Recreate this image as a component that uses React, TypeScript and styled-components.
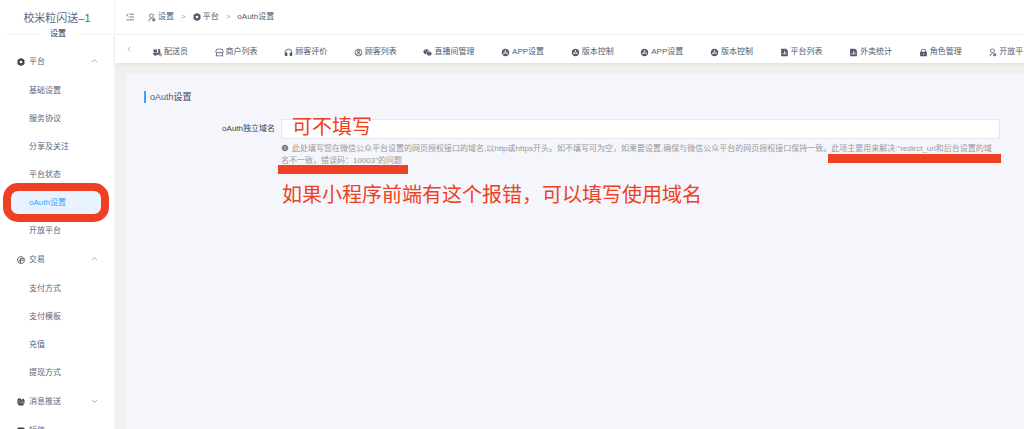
import React from "react";
import styled, { createGlobalStyle, css } from "styled-components";
import {
  RiAccountCircleLine,
  RiAppStoreFill,
  RiFileChartFill,
  RiHeadphoneFill,
  RiInformationFill,
  RiLockFill,
  RiStore2Line,
  RiUserSettingsLine,
  RiWechatFill,
} from "react-icons/ri";

const RED = "#ee4023";

const GlobalStyle = createGlobalStyle`
  * { box-sizing: border-box; }
  body {
    margin: 0;
    overflow: hidden;
    background: #f0f0f0;
    color: #515a6e;
    font: 8px/12px "Liberation Sans", "Noto Sans CJK SC", sans-serif;
  }
  button, input { font: inherit; color: inherit; }
  a { color: inherit; text-decoration: none; }
  svg { display: block; flex: none; }
`;

const Page = styled.div`
  display: flex;
  height: 100vh;
`;

const Sidebar = styled.aside`
  flex: none;
  width: 115px;
  overflow: hidden;
  background: #fff;
  border-right: 1px solid #f4f4f4;
  color: #5c6579;
`;

const Brand = styled.h1`
  margin: 0;
  padding-top: 10px;
  font-size: 11px;
  line-height: 16px;
  font-weight: 400;
  text-align: center;
`;

const SectionName = styled.div`
  display: flex;
  align-items: center;
  gap: 12px;
  padding: 2px 4px 0 6px;
  margin-bottom: 7px;
  color: #303133;
  &::before, &::after {
    content: "";
    flex: 1;
    height: 1px;
    background: #f0f1f3;
  }
`;

const GroupHeader = styled.button`
  display: flex;
  align-items: center;
  gap: 4px;
  width: 100%;
  height: 29px;
  padding: 0 16px 0 17px;
  border: 0;
  background: none;
  text-align: left;
`;

const GroupLabel = styled.span`
  flex: 1;
`;

const GroupList = styled.ul`
  margin: 0;
  padding: 1px 6px 0;
  list-style: none;
`;

const MenuLink = styled.a<{ $active?: boolean }>`
  position: relative;
  display: flex;
  align-items: center;
  height: 28px;
  padding-left: 23px;
  ${(p) =>
    p.$active &&
    css`
      background: #e8f3ff;
      color: #409eff;
      border-radius: 2px;
    `}
`;

const Ring = styled.span`
  position: absolute;
  inset: -6px -1px -5px -3px;
  border: 8px solid ${RED};
  border-radius: 15px;
`;

const Main = styled.main`
  flex: 1;
  min-width: 0;
  display: flex;
  flex-direction: column;
`;

const TopBar = styled.header`
  display: flex;
  align-items: center;
  gap: 13px;
  height: 35px;
  padding: 0 11px;
  background: #fff;
  border-bottom: 1px solid #f2f2f4;
`;

const IconButton = styled.button`
  display: flex;
  padding: 0;
  border: 0;
  background: none;
`;

const Crumbs = styled.nav`
  display: flex;
  align-items: center;
  gap: 7px;
`;

const Crumb = styled.a`
  display: flex;
  align-items: center;
  gap: 2px;
`;

const Separator = styled.span`
  color: #a0a4ad;
`;

const TabBar = styled.div`
  display: flex;
  height: 28px;
  flex: none;
  padding-left: 11px;
  background: #fff;
  box-shadow: 0 1px 3px rgba(0, 0, 0, 0.08);
`;

const ScrollButton = styled(IconButton)`
  width: 27px;
  padding-top: 11px;
`;

const Tabs = styled.nav`
  flex: 1;
  min-width: 0;
  display: flex;
  align-items: center;
  column-gap: 2.6vw;
  padding-top: 6px;
  overflow: hidden;
  white-space: nowrap;
`;

const Tab = styled.a`
  flex: none;
  display: flex;
  align-items: center;
  gap: 2px;
`;

const Panel = styled.section`
  flex: 1;
  margin: 11px 0 0 11px;
  padding: 17px 24px 0 18px;
  background: #f5f6fb;
`;

const PanelTitle = styled.h2`
  margin: 0 0 16px;
  padding-left: 4px;
  border-left: 2px solid #409eff;
  font-size: 9px;
  line-height: 12px;
  font-weight: 500;
`;

const FormRow = styled.div`
  display: flex;
  gap: 6px;
`;

const FieldLabel = styled.label`
  width: 131px;
  line-height: 20px;
  text-align: right;
  color: #404145;
`;

const Field = styled.div`
  position: relative;
  flex: 1;
  min-width: 0;
`;

const TextInput = styled.input`
  display: block;
  width: 100%;
  height: 20px;
  padding: 0 8px;
  border: 1px solid #e6e8ee;
  border-radius: 2px;
  background: #fff;
`;

const Help = styled.p`
  margin: 4px 0 0;
  padding-right: 4px;
  color: #999;
`;

const HelpIcon = styled(RiInformationFill)`
  display: inline-block;
  margin-right: 3px;
  vertical-align: -1px;
  color: #808080;
`;

const Note = styled.span<{ $top: number; $left: number }>`
  position: absolute;
  top: ${(p) => p.$top}px;
  left: ${(p) => p.$left}px;
  color: ${RED};
  font-size: 20px;
  line-height: 24px;
  white-space: nowrap;
  pointer-events: none;
`;

const Marker = styled.span<{ $end?: boolean }>`
  position: absolute;
  height: 9px;
  background: ${RED};
  ${(p) =>
    p.$end
      ? css`top: 35px; right: -1px; width: 173px;`
      : css`top: 46px; left: -3px; width: 130px;`}
`;

const Chevron = ({ d }: { d: string }) => (
  <svg width="7" height="7" viewBox="0 0 7 7" fill="none" stroke="#8c919c" strokeWidth="0.7">
    <path d={d} />
  </svg>
);

const FoldIcon = () => (
  <svg width="8" height="8" viewBox="0 0 8 8" fill="none" stroke="#515a6e" strokeWidth="0.8">
    <path d="M3.6 1.2H8M3.6 4H8M0.5 6.9H8M2.2 0.6L0.7 2.1L2.2 3.6" />
  </svg>
);

const GearIcon = ({ size, color = "currentColor" }: { size: number; color?: string }) => (
  <svg width={size} height={size} viewBox="0 0 16 16" fill={color}>
    <path
      fillRule="evenodd"
      d="M5.4 0.5h5.2l0.6 2 2-0.3 2.4 4-1.3 1.8 1.3 1.8-2.4 4-2-0.3-0.6 2H5.4l-0.6-2-2 0.3-2.4-4L1.7 8 0.4 6.2l2.4-4 2 0.3zM8 5.3a2.7 2.7 0 1 0 0 5.4 2.7 2.7 0 0 0 0-5.4z"
    />
  </svg>
);

const ScooterIcon = ({ size }: { size: number }) => (
  <svg width={size} height={size} viewBox="0 0 18 18" fill="currentColor">
    <path d="M1 3h7v5H1z" />
    <path d="M1 9h8l1.5 2.5V2H15v1.6h-1.6L15.5 11h-2L12 13.5H7.5a2.7 2.7 0 0 1-5.3 0H0.6V11z" />
    <circle cx="15" cy="13.6" r="2" fill="none" stroke="currentColor" strokeWidth="1.6" />
  </svg>
);

const TradeIcon = () => (
  <svg width="8" height="8" viewBox="0 0 16 16" fill="none" stroke="#555" strokeWidth="1.7">
    <path d="M13.5 4.5A6.8 6.8 0 1 0 8 14.8M7 5h7.5v6.5L11 14.5H7zM7 8.5h7M4.5 7v4" />
  </svg>
);

const PushIcon = () => (
  <svg width="8" height="8" viewBox="0 0 16 16">
    <path d="M2 1h5l2 3 3-3 3 3v6l-3 5H4l-3-4V4z" fill="#444" />
    <path d="M3 4l4 4-4 3M9 4l3 3-4 5M11 9l3 2" fill="none" stroke="#fff" strokeWidth="1.1" />
  </svg>
);

const MessageIcon = () => (
  <svg width="8" height="8" viewBox="0 0 16 16">
    <path d="M3 1h10q2 0 2 2v8q0 2-2 2H9l-4 3v-3H3q-2 0-2-2V3q0-2 2-2z" fill="#444" />
  </svg>
);

const groups = [
  {
    name: "平台",
    icon: <GearIcon size={8} color="#444" />,
    items: ["基础设置", "服务协议", "分享及关注", "平台状态", "oAuth设置", "开放平台"],
  },
  { name: "交易", icon: <TradeIcon />, items: ["支付方式", "支付模板", "充值", "提现方式"] },
  { name: "消息推送", icon: <PushIcon />, items: [] },
  { name: "短信", icon: <MessageIcon />, items: [] },
];

const tabs = [
  { name: "配送员", Icon: ScooterIcon },
  { name: "商户列表", Icon: RiStore2Line },
  { name: "顾客评价", Icon: RiHeadphoneFill },
  { name: "顾客列表", Icon: RiAccountCircleLine },
  { name: "直播间管理", Icon: RiWechatFill },
  { name: "APP设置", Icon: RiAppStoreFill },
  { name: "版本控制", Icon: RiAppStoreFill },
  { name: "APP设置", Icon: RiAppStoreFill },
  { name: "版本控制", Icon: RiAppStoreFill },
  { name: "平台列表", Icon: RiFileChartFill },
  { name: "外卖统计", Icon: RiFileChartFill },
  { name: "角色管理", Icon: RiLockFill },
  { name: "开放平台", Icon: RiUserSettingsLine },
];

export default function App() {
  return (
    <Page>
      <GlobalStyle />
      <Sidebar>
        <Brand>校米粒闪送–1</Brand>
        <SectionName>设置</SectionName>
        {groups.map((group) => (
          <div key={group.name}>
            <GroupHeader type="button" aria-expanded={group.items.length > 0}>
              {group.icon}
              <GroupLabel>{group.name}</GroupLabel>
              <Chevron d={group.items.length ? "M1 4L3.5 1.6L6 4" : "M1 2L3.5 4.4L6 2"} />
            </GroupHeader>
            {group.items.length > 0 && (
              <GroupList>
                {group.items.map((item) => {
                  const active = item === "oAuth设置";
                  return (
                    <li key={item}>
                      <MenuLink href="#" $active={active}>
                        {item}
                        {active && <Ring />}
                      </MenuLink>
                    </li>
                  );
                })}
              </GroupList>
            )}
          </div>
        ))}
      </Sidebar>
      <Main>
        <TopBar>
          <IconButton type="button" aria-label="收起菜单">
            <FoldIcon />
          </IconButton>
          <Crumbs>
            <Crumb href="#">
              <RiUserSettingsLine size={9} />
              设置
            </Crumb>
            <Separator>&gt;</Separator>
            <Crumb href="#">
              <GearIcon size={8} />
              平台
            </Crumb>
            <Separator>&gt;</Separator>
            <Crumb href="#">oAuth设置</Crumb>
          </Crumbs>
        </TopBar>
        <TabBar>
          <ScrollButton type="button" aria-label="向左滚动">
            <Chevron d="M4.4 0.8L2 3.2L4.4 5.6" />
          </ScrollButton>
          <Tabs>
            {tabs.map(({ name, Icon }, i) => (
              <Tab href="#" key={i}>
                <Icon size={9} />
                {name}
              </Tab>
            ))}
          </Tabs>
        </TabBar>
        <Panel>
          <PanelTitle>oAuth设置</PanelTitle>
          <FormRow>
            <FieldLabel htmlFor="domain">oAuth独立域名</FieldLabel>
            <Field>
              <TextInput id="domain" type="text" />
              <Help>
                <HelpIcon size={8} />
                此处填写您在微信公众平台设置的网页授权接口的域名,以http或https开头。如不填写可为空，如果要设置,确保与微信公众平台的网页授权接口保持一致。此项主要用来解决:"redirct_url和后台设置的域名不一致，错误码：10003"的问题
              </Help>
              <Marker $end />
              <Marker />
              <Note $top={-4} $left={11}>可不填写</Note>
              <Note $top={64} $left={1}>如果小程序前端有这个报错，可以填写使用域名</Note>
            </Field>
          </FormRow>
        </Panel>
      </Main>
    </Page>
  );
}
